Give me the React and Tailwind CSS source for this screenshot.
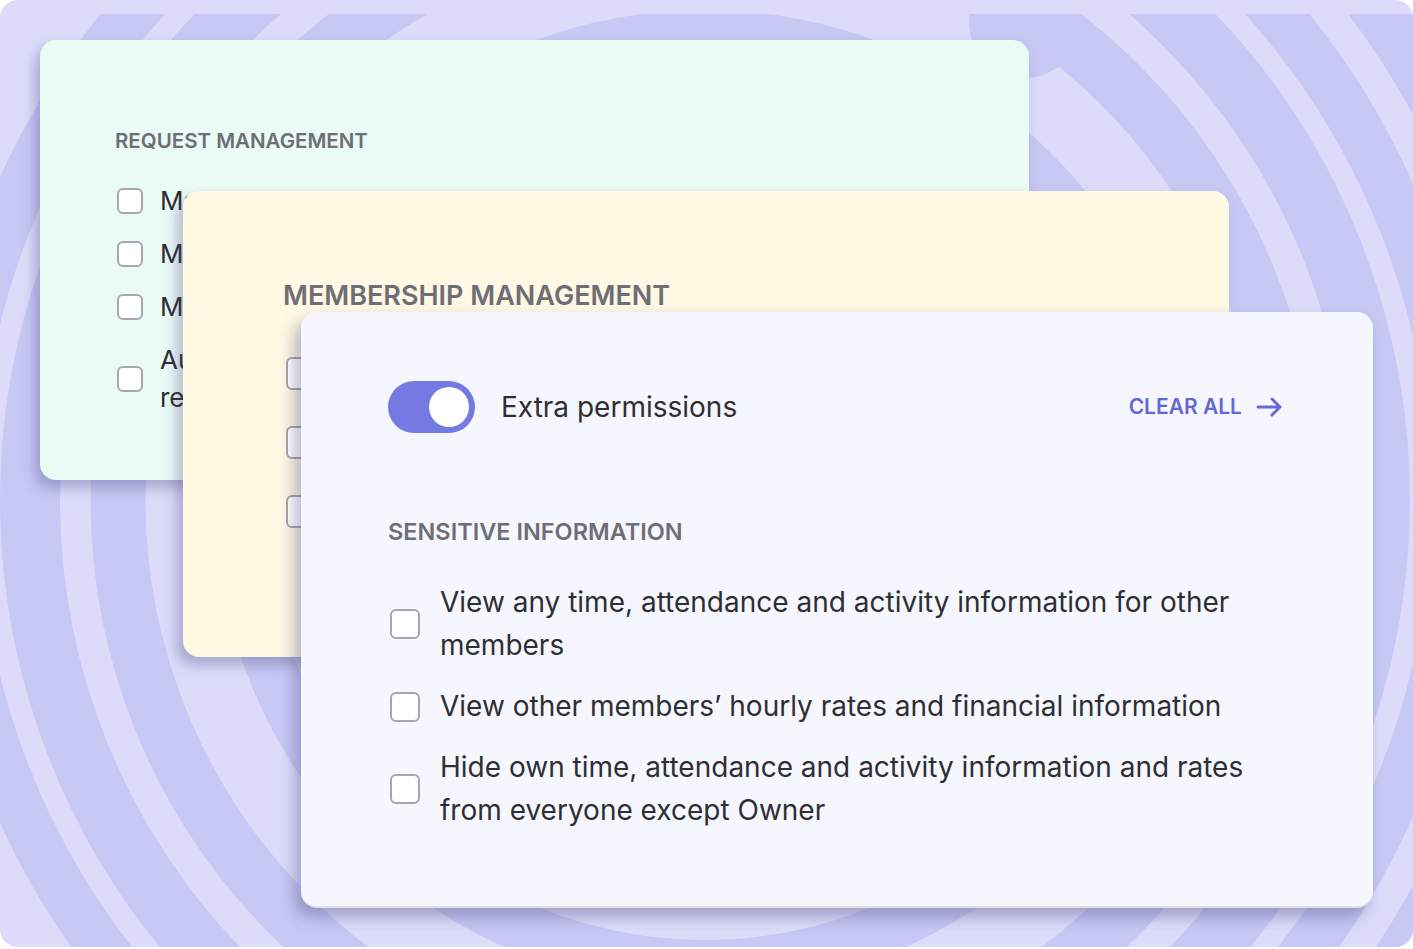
import React from "react";

// decorative rings behind the cards
function Rings() {
  const cx = 705;
  const cy = 500;
  const bands = [
    {r: 465, w: 50},
    {r: 587, w: 55},
    {r: 675, w: 60},
    {r: 751, w: 49},
  ];
  return (
    <svg
      className="[grid-area:1/1] w-[1413px] h-[933px] mt-[14px]"
      viewBox="0 14 1413 933"
    >
      <defs>
        <clipPath id="right-side">
          <rect x="930" y="0" width="500" height="960" />
        </clipPath>
      </defs>
      {bands.map(({r, w}) => (
        <circle key={r} cx={cx} cy={cy} r={r} fill="none" stroke="#c8c8f4" strokeWidth={w} />
      ))}
      <circle cx={cx} cy={cy} r="840" fill="none" stroke="#c8c8f4" strokeWidth="68" clipPath="url(#right-side)" />
      <circle cx="1025" cy="22" r="56" fill="#c8c8f4" />
    </svg>
  );
}

function Box({size}) {
  return (
    <span
      className={
        "shrink-0 bg-white border-2 border-[#a6a6ae] rounded-[6px] " + size
      }
    />
  );
}

function Toggle() {
  return (
    <div className="w-[87px] h-[52px] rounded-full bg-[#747ae2] flex items-center justify-end pr-[6px]">
      <div className="w-[40px] h-[40px] rounded-full bg-white" />
    </div>
  );
}

const requestItems = [
  ["Manage your own requests"],
  ["Manage schedule requests"],
  ["Manage timesheet requests"],
  ["Auto-approve time off, manual time and timesheet", "requests"],
];

const sensitive = [
  "View any time, attendance and activity information for other members",
  "View other members’ hourly rates and financial information",
  "Hide own time, attendance and activity information and rates from everyone except Owner",
];

export default function App() {
  return (
    <div className="bg-white w-[1413px] h-[949px] font-['Inter','Noto_Sans',sans-serif]">
      <div className="grid w-[1413px] h-[947px] rounded-[18px] overflow-hidden bg-[#dcdcfa]">
        <Rings />

        {/* request management */}
        <div className="[grid-area:1/1] self-start ml-[40px] mt-[40px] w-[989px] h-[440px] rounded-[16px] bg-[#eafaf4] shadow-[-5px_8px_14px_rgba(70,70,130,0.35)] pt-[89px] pl-[75px]">
          <div className="text-[20.5px] leading-[24px] font-semibold text-[#6e6e76] uppercase">
            Request management
          </div>
          <div className="mt-[29px] flex flex-col gap-[15px]">
            {requestItems.map((lines) => (
              <div key={lines[0]} className="flex items-center gap-[17px] ml-[2px]">
                <Box size="w-[26px] h-[26px]" />
                <div className="text-[26px] leading-[38px] text-[#2d2d31]">
                  {lines.map((l) => (
                    <div key={l}>{l}</div>
                  ))}
                </div>
              </div>
            ))}
          </div>
        </div>

        {/* membership management */}
        <div className="[grid-area:1/1] self-start ml-[183px] mt-[191px] w-[1046px] h-[466px] rounded-[16px] bg-[#fff8e3] shadow-[-6px_8px_14px_rgba(70,70,130,0.35)] pt-[89px] pl-[100px]">
          <div className="text-[27px] leading-[32px] font-semibold text-[#6e6e76] uppercase">
            Membership management
          </div>
          <div className="mt-[45px] flex flex-col gap-[36px] ml-[3px]">
            {["Manage members", "Invite members", "Remove members"].map((t) => (
              <div key={t} className="flex items-center gap-[20px]">
                <Box size="w-[33px] h-[33px]" />
                <span className="text-[30px] leading-[33px] text-[#2d2d31]">{t}</span>
              </div>
            ))}
          </div>
        </div>

        {/* extra permissions */}
        <div className="[grid-area:1/1] self-start ml-[301px] mt-[312px] w-[1072px] h-[596px] rounded-[16px] bg-[#f6f7fe] border-b-2 border-[#dedee6] shadow-[-6px_9px_16px_rgba(70,70,130,0.4)] pt-[69px] pl-[87px] pr-[90px]">
          <div className="flex items-center">
            <Toggle />
            <span className="ml-[26px] text-[28px] leading-[34px] text-[#2f2f33]">
              Extra permissions
            </span>
            <button className="ml-auto flex items-center gap-[14px] text-[#6468d6]">
              <span className="text-[21px] leading-[24px] font-semibold uppercase">Clear all</span>
              <svg width="27" height="20" viewBox="0 0 27 20" fill="none" stroke="currentColor" strokeWidth="3" strokeLinecap="round" strokeLinejoin="round">
                <path d="M2 10h22M16 2l8 8-8 8" />
              </svg>
            </button>
          </div>

          <div className="mt-[86px] text-[23.5px] leading-[26px] font-semibold text-[#6e6e76] uppercase">
            Sensitive information
          </div>

          <div className="mt-[36px] flex flex-col gap-[18px]">
            {sensitive.map((t) => (
              <div key={t} className="flex items-center gap-[20px] ml-[2px]">
                <Box size="w-[30px] h-[30px]" />
                <span className="text-[28px] leading-[43px] text-[#2f2f33]">{t}</span>
              </div>
            ))}
          </div>
        </div>
      </div>
    </div>
  );
}
